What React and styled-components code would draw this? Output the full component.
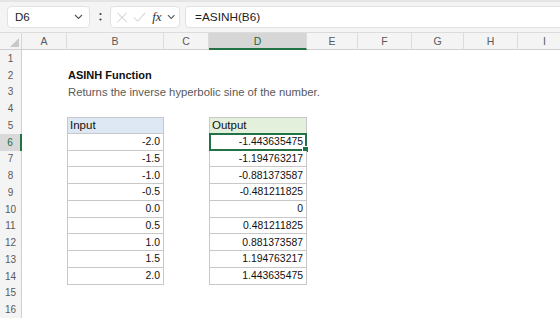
import React from "react";
import styled, { createGlobalStyle } from "styled-components";

const GlobalStyle = createGlobalStyle`
  body {
    margin: 0;
    background: #ffffff;
    font-family: "Liberation Sans", Arial, sans-serif;
  }
`;

const Page = styled.div`
  width: 560px;
  height: 320px;
  overflow: hidden;
  display: flex;
  flex-direction: column;
`;

const Toolbar = styled.div`
  height: 33px;
  flex: none;
  display: flex;
  align-items: center;
  background: #f4f4f4;
  border-top: 2px solid #e4e4e4;
  border-bottom: 1px solid #dcdcdc;
  box-sizing: border-box;
  padding-left: 7px;
  overflow: hidden;
`;

const Box = styled.div`
  height: 22px;
  box-sizing: border-box;
  background: #ffffff;
  border: 1px solid #e2e2e2;
  border-radius: 4px;
  display: flex;
  align-items: center;
`;

const NameBox = styled(Box)`
  width: 83px;
  padding: 0 6px 0 7px;
  justify-content: space-between;
  font-size: 11.5px;
  color: #222;
`;

const Kebab = styled.div`
  width: 20px;
  display: flex;
  justify-content: center;
  color: #555;
`;

const FxGroup = styled(Box)`
  width: 70px;
  padding: 0 4px 0 5px;
  gap: 5px;
`;

const Fx = styled.span`
  font-family: "Liberation Serif", serif;
  font-style: italic;
  font-size: 13px;
  color: #333;
  margin-left: 1px;
`;

const FormulaBox = styled(Box)`
  flex: 1;
  margin-left: 5px;
  margin-right: -6px;
  padding-left: 9px;
  font-size: 11.8px;
  color: #222;
`;

const Sheet = styled.div`
  display: grid;
  grid-template-columns: 22px 45px 97px 45px 98px 51px 54px 52px 54px 54px;
  grid-template-rows: 17px repeat(16, 16.75px);
  background: #ffffff;
`;

const Corner = styled.div`
  grid-row: 1;
  grid-column: 1;
  background: #f4f4f4;
  border-right: 1px solid #d6d6d6;
  border-bottom: 1px solid #d0d0d0;
  display: flex;
  align-items: flex-end;
  justify-content: flex-end;
  padding: 0 2px 2px 0;
  box-sizing: border-box;
`;

const ColHead = styled.div`
  grid-row: 1;
  grid-column: ${(p) => p.$col};
  background: ${(p) => (p.$active ? "#d6d6d6" : "#f4f4f4")};
  border-right: 1px solid #dcdcdc;
  border-bottom: ${(p) => (p.$active ? "2px solid #217346" : "1px solid #d0d0d0")};
  box-sizing: border-box;
  display: flex;
  align-items: center;
  justify-content: center;
  font-size: 10.5px;
  color: ${(p) => (p.$active ? "#1e6b41" : "#5a5a5a")};
`;

const RowHead = styled.div`
  grid-row: ${(p) => p.$row};
  grid-column: 1;
  background: ${(p) => (p.$active ? "#d9d9d9" : "#f4f4f4")};
  border-right: ${(p) => (p.$active ? "2px solid #217346" : "1px solid #d0d0d0")};
  box-sizing: border-box;
  display: flex;
  align-items: center;
  justify-content: center;
  font-size: 10px;
  color: ${(p) => (p.$active ? "#1e6b41" : "#5a5a5a")};
`;

const Title = styled.div`
  grid-row: ${(p) => p.$row};
  grid-column: 3 / 10;
  padding-left: 1px;
  display: flex;
  align-items: center;
  white-space: nowrap;
  font-size: ${(p) => (p.$bold ? "11px" : "11.3px")};
  font-weight: ${(p) => (p.$bold ? 700 : 400)};
  color: ${(p) => (p.$bold ? "#111" : "#595959")};
`;

const Cell = styled.div`
  grid-row: ${(p) => p.$row};
  grid-column: ${(p) => p.$col};
  position: relative;
  box-sizing: border-box;
  border: 1px solid #c8c8c8;
  border-top: ${(p) => (p.$first ? "1px solid #c8c8c8" : "none")};
  background: ${(p) => p.$bg || "#ffffff"};
  display: flex;
  align-items: center;
  justify-content: ${(p) => (p.$head ? "flex-start" : "flex-end")};
  padding: 0 3px 0 2px;
  font-size: ${(p) => (p.$head ? "11.5px" : "10.4px")};
  color: #111;
  white-space: nowrap;
`;

const Selection = styled.div`
  position: absolute;
  left: -1px;
  right: -1px;
  top: -1px;
  bottom: -1px;
  border: 2px solid #217346;
  pointer-events: none;
`;

const Handle = styled.div`
  position: absolute;
  right: -4px;
  bottom: -4px;
  width: 5px;
  height: 5px;
  background: #217346;
  border: 1px solid #ffffff;
`;

const Chevron = () => (
  <svg width="9" height="6" viewBox="0 0 9 6">
    <path d="M1 1l3.5 3.5L8 1" fill="none" stroke="#555" strokeWidth="1.1" />
  </svg>
);

const inputs = ["-2.0", "-1.5", "-1.0", "-0.5", "0.0", "0.5", "1.0", "1.5", "2.0"];
const outputs = [
  "-1.443635475",
  "-1.194763217",
  "-0.881373587",
  "-0.481211825",
  "0",
  "0.481211825",
  "0.881373587",
  "1.194763217",
  "1.443635475",
];
const columns = ["A", "B", "C", "D", "E", "F", "G", "H", "I"];
const rows = Array.from({ length: 16 }, (_, i) => i + 1);

const App = () => {
  return (
    <Page>
      <GlobalStyle />
      <Toolbar>
        <NameBox>
          <span>D6</span>
          <Chevron />
        </NameBox>
        <Kebab>
          <svg width="3" height="10" viewBox="0 0 3 10">
            <circle cx="1.5" cy="2" r="1.1" fill="#444" />
            <circle cx="1.5" cy="7.5" r="1.1" fill="#444" />
          </svg>
        </Kebab>
        <FxGroup>
          <svg width="13" height="13" viewBox="0 0 13 13">
            <path d="M1.5 1.5l10 10M11.5 1.5l-10 10" stroke="#c4c4c4" strokeWidth="1" />
          </svg>
          <svg width="14" height="12" viewBox="0 0 14 12">
            <path d="M1 6.5l4 4L13 1.5" fill="none" stroke="#c4c4c4" strokeWidth="1" />
          </svg>
          <Fx>fx</Fx>
          <Chevron />
        </FxGroup>
        <FormulaBox>=ASINH(B6)</FormulaBox>
      </Toolbar>
      <Sheet>
        <Corner>
          <svg width="9" height="9" viewBox="0 0 9 9">
            <path d="M9 0V9H0Z" fill="#c8c8c8" />
          </svg>
        </Corner>
        {columns.map((c, i) => (
          <ColHead key={c} $col={i + 2} $active={c === "D"}>
            {c}
          </ColHead>
        ))}
        {rows.map((r) => (
          <RowHead key={r} $row={r + 1} $active={r === 6}>
            {r}
          </RowHead>
        ))}
        <Title $row={3} $bold>
          ASINH Function
        </Title>
        <Title $row={4}>Returns the inverse hyperbolic sine of the number.</Title>
        <Cell $row={6} $col={3} $first $head $bg="#dde8f4">
          Input
        </Cell>
        <Cell $row={6} $col={5} $first $head $bg="#e3f0dc">
          Output
        </Cell>
        {inputs.map((v, i) => (
          <Cell key={"in" + i} $row={i + 7} $col={3}>
            {v}
          </Cell>
        ))}
        {outputs.map((v, i) => (
          <Cell key={"out" + i} $row={i + 7} $col={5}>
            {v}
            {i === 0 && (
              <Selection>
                <Handle />
              </Selection>
            )}
          </Cell>
        ))}
      </Sheet>
    </Page>
  );
};

export default App;
